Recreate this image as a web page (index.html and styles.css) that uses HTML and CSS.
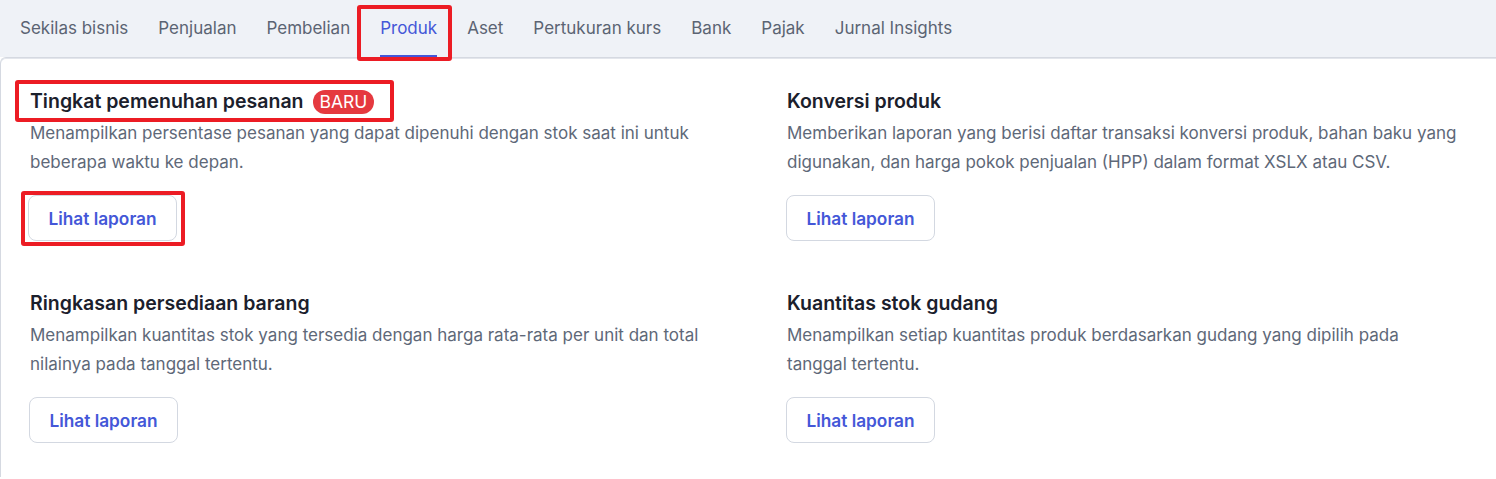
FILE: index.html
```html
<!DOCTYPE html>
<html lang="id">
<head>
<meta charset="utf-8">
<title>Laporan Produk</title>
<link rel="stylesheet" href="styles.css">
</head>
<body>
<nav class="tabs">
  <a class="tab">Sekilas bisnis</a>
  <a class="tab">Penjualan</a>
  <a class="tab">Pembelian</a>
  <a class="tab tab-active mark-tab">Produk</a>
  <a class="tab">Aset</a>
  <a class="tab">Pertukuran kurs</a>
  <a class="tab">Bank</a>
  <a class="tab">Pajak</a>
  <a class="tab">Jurnal Insights</a>
</nav>
<main class="panel">
  <div class="grid">
    <section class="card">
      <h3 class="card-title mark-title">Tingkat pemenuhan pesanan <span class="badge">BARU</span></h3>
      <p class="card-desc">Menampilkan persentase pesanan yang dapat dipenuhi dengan stok saat ini untuk beberapa waktu ke depan.</p>
      <div class="btn-wrap mark-btn"><button class="btn">Lihat laporan</button></div>
    </section>
    <section class="card">
      <h3 class="card-title">Konversi produk</h3>
      <p class="card-desc">Memberikan laporan yang berisi daftar transaksi konversi produk, bahan baku yang digunakan, dan harga pokok penjualan (HPP) dalam format XSLX atau CSV.</p>
      <div class="btn-wrap"><button class="btn">Lihat laporan</button></div>
    </section>
    <section class="card">
      <h3 class="card-title">Ringkasan persediaan barang</h3>
      <p class="card-desc">Menampilkan kuantitas stok yang tersedia dengan harga rata-rata per unit dan total nilainya pada tanggal tertentu.</p>
      <div class="btn-wrap"><button class="btn">Lihat laporan</button></div>
    </section>
    <section class="card">
      <h3 class="card-title">Kuantitas stok gudang</h3>
      <p class="card-desc">Menampilkan setiap kuantitas produk berdasarkan gudang yang dipilih pada tanggal tertentu.</p>
      <div class="btn-wrap"><button class="btn">Lihat laporan</button></div>
    </section>
  </div>
</main>
</body>
</html>
```
FILE: styles.css
```css
html, body {
  margin: 0;
  padding: 0;
  background: #ffffff;
}
body {
  font-family: Inter, "Noto Sans", "Liberation Sans", sans-serif;
  width: 1496px;
  height: 479px;
  overflow: hidden;
}
.tabs {
  display: flex;
  align-items: stretch;
  height: 57px;
  padding-left: 5px;
  background: #eff2f7;
}
.tab {
  position: relative;
  display: flex;
  align-items: center;
  padding: 0 15px 1px;
  font-size: 17px;
  color: #5b6473;
  white-space: nowrap;
}
.tab-active {
  color: #4457d8;
}
.tab-active::after {
  content: "";
  position: absolute;
  left: 15px;
  right: 15px;
  bottom: 0;
  height: 2px;
  background: #4457d8;
}
.mark-tab::before {
  content: "";
  position: absolute;
  left: -8px;
  right: 0;
  top: 5px;
  bottom: -4px;
  border: 4px solid #ec1c24;
  border-radius: 3px;
  z-index: 2;
}
.panel {
  border-top: 1px solid #d5d9e1;
  border-left: 1px solid #d5d9e1;
  border-top-left-radius: 6px;
  box-shadow: 0 1px 0 #e3e6ec inset;
  padding: 29px 0 0 29px;
  height: 420px;
  box-sizing: border-box;
}
.grid {
  display: grid;
  grid-template-columns: 700px 673px;
  column-gap: 57px;
  row-gap: 48px;
}
.card {
  display: flex;
  flex-direction: column;
  align-items: flex-start;
}
.card-title {
  position: relative;
  display: flex;
  align-items: center;
  gap: 9px;
  margin: 0;
  font-size: 19.5px;
  line-height: 29px;
  font-weight: 600;
  color: #1b202c;
}
.badge {
  display: inline-block;
  padding: 0 7px;
  height: 24px;
  line-height: 24px;
  border-radius: 12px;
  background: #e5393f;
  color: #ffffff;
  font-size: 17.5px;
  font-weight: 400;
}
.mark-title::after {
  content: "";
  position: absolute;
  left: -15px;
  right: -20px;
  top: -7px;
  bottom: -6px;
  border: 4px solid #ec1c24;
  border-radius: 3px;
}
.card-desc {
  margin: 3px 0 0;
  font-size: 17px;
  line-height: 29px;
  color: #5e6878;
}
.btn-wrap {
  position: relative;
  margin-top: 18px;
  margin-left: -1px;
}
.mark-btn {
  margin-left: -2px;
}
.mark-btn::after {
  content: "";
  position: absolute;
  left: -7px;
  right: -8px;
  top: -4px;
  bottom: -5px;
  border: 4px solid #ec1c24;
  border-radius: 3px;
}
.btn {
  display: block;
  width: 149px;
  height: 46px;
  padding: 0;
  border: 1px solid #d3d8e1;
  border-radius: 8px;
  background: #ffffff;
  font-family: inherit;
  font-size: 17.3px;
  font-weight: 600;
  color: #4457d8;
}
```
